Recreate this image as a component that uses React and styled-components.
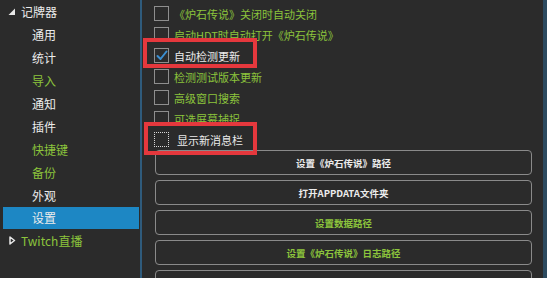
import React from "react";
import styled, { createGlobalStyle } from "styled-components";

const GlobalStyle = createGlobalStyle`
  html, body {
    margin: 0;
    padding: 0;
    background: #ffffff;
  }
  body {
    font-family: "Noto Sans CJK SC", "Noto Sans", sans-serif;
  }
`;

const GREEN = "#8cc43c";
const WHITE = "#ececec";

const Window = styled.div`
  width: 547px;
  height: 278px;
  display: flex;
  background: #2b2b2b;
  border-right: 4px solid #2c4a5f;
  box-sizing: border-box;
  overflow: hidden;
`;

const Sidebar = styled.div`
  width: 140px;
  flex-shrink: 0;
  display: flex;
  flex-direction: column;
  padding-top: 0.5px;
`;

const Divider = styled.div`
  width: 2px;
  background: #2f5b7c;
  flex-shrink: 0;
`;

const NavItem = styled.div`
  height: 22.9px;
  display: flex;
  align-items: center;
  gap: 5px;
  margin-left: 3px;
  margin-right: 1px;
  padding-left: ${(p) => (p.$root ? "5px" : "29px")};
  font-size: 12px;
  color: ${(p) => (p.$green ? GREEN : WHITE)};
  background: ${(p) => (p.$active ? "#1d87c4" : "transparent")};
  flex-shrink: 0;
`;

const Arrow = styled.svg`
  width: 8px;
  height: 9px;
  flex-shrink: 0;
`;

const Content = styled.div`
  flex: 1;
  position: relative;
  padding: 3px 11px 0 12px;
  display: flex;
  flex-direction: column;
`;

const CheckRow = styled.div`
  height: 21px;
  display: flex;
  align-items: center;
  gap: 5px;
  font-size: 11px;
  color: ${(p) => (p.$white ? WHITE : GREEN)};
  flex-shrink: 0;
`;

const Box = styled.div`
  width: 15px;
  height: 15px;
  box-sizing: border-box;
  border: 1.5px ${(p) => (p.$focus ? "dotted #d8d8d8" : "solid #8e8e8e")};
  background: #2b2b2b;
  display: flex;
  align-items: center;
  justify-content: center;
  flex-shrink: 0;
`;

const Label = styled.span`
  padding-left: ${(p) => (p.$focus ? "3px" : "0")};
`;

const Buttons = styled.div`
  display: flex;
  flex-direction: column;
  gap: 5px;
  margin-left: 1px;
`;

const Button = styled.div`
  height: 25px;
  box-sizing: border-box;
  border: 1.5px solid #8a8a8a;
  border-radius: 4px;
  display: flex;
  align-items: center;
  justify-content: center;
  font-size: 9.5px;
  font-weight: bold;
  color: ${(p) => (p.$green ? GREEN : WHITE)};
  flex-shrink: 0;
`;

const Highlight = styled.div`
  position: absolute;
  left: ${(p) => p.$x}px;
  top: ${(p) => p.$y}px;
  width: ${(p) => p.$w}px;
  height: ${(p) => p.$h}px;
  border: 4px solid #e5383d;
  box-sizing: border-box;
  pointer-events: none;
`;

const navItems = [
  { label: "通用" },
  { label: "统计" },
  { label: "导入", green: true },
  { label: "通知" },
  { label: "插件" },
  { label: "快捷键", green: true },
  { label: "备份", green: true },
  { label: "外观" },
  { label: "设置", active: true },
];

const options = [
  { label: "《炉石传说》关闭时自动关闭" },
  { label: "启动HDT时自动打开《炉石传说》" },
  { label: "自动检测更新", checked: true, white: true },
  { label: "检测测试版本更新" },
  { label: "高级窗口搜索" },
  { label: "可选屏幕捕捉" },
  { label: "显示新消息栏", white: true, focus: true },
];

const buttons = [
  { label: "设置《炉石传说》路径" },
  { label: "打开APPDATA文件夹" },
  { label: "设置数据路径", green: true },
  { label: "设置《炉石传说》日志路径", green: true },
  { label: "设置《炉石传说》配置路径", green: true },
];

function Check() {
  return (
    <svg width="12" height="11" viewBox="0 0 12 11">
      <path
        d="M1.5 6 L4.5 9 L10.5 1.5"
        fill="none"
        stroke="#3b8fd2"
        strokeWidth="2"
        strokeLinecap="round"
        strokeLinejoin="round"
      />
    </svg>
  );
}

export default function App() {
  return (
    <>
      <GlobalStyle />
      <Window>
        <Sidebar>
          <NavItem $root>
            <Arrow viewBox="0 0 8 9">
              <path d="M7 1.5 L7 8 L0.5 8 Z" fill="#e8e8e8" />
            </Arrow>
            记牌器
          </NavItem>
          {navItems.map((item) => (
            <NavItem key={item.label} $green={item.green} $active={item.active}>
              {item.label}
            </NavItem>
          ))}
          <NavItem $root $green>
            <Arrow viewBox="0 0 8 9">
              <path d="M2 1 L6.5 4.5 L2 8 Z" fill="none" stroke="#e8e8e8" strokeWidth="1.5" strokeLinejoin="round" />
            </Arrow>
            Twitch直播
          </NavItem>
        </Sidebar>
        <Divider />
        <Content>
          {options.map((opt) => (
            <CheckRow key={opt.label} $white={opt.white}>
              <Box $focus={opt.focus}>{opt.checked && <Check />}</Box>
              <Label $focus={opt.focus}>{opt.label}</Label>
            </CheckRow>
          ))}
          <Buttons>
            {buttons.map((b) => (
              <Button key={b.label} $green={b.green}>
                {b.label}
              </Button>
            ))}
          </Buttons>
          <Highlight $x={1} $y={38} $w={114} $h={30} />
          <Highlight $x={2} $y={122} $w={113} $h={33} />
        </Content>
      </Window>
    </>
  );
}
